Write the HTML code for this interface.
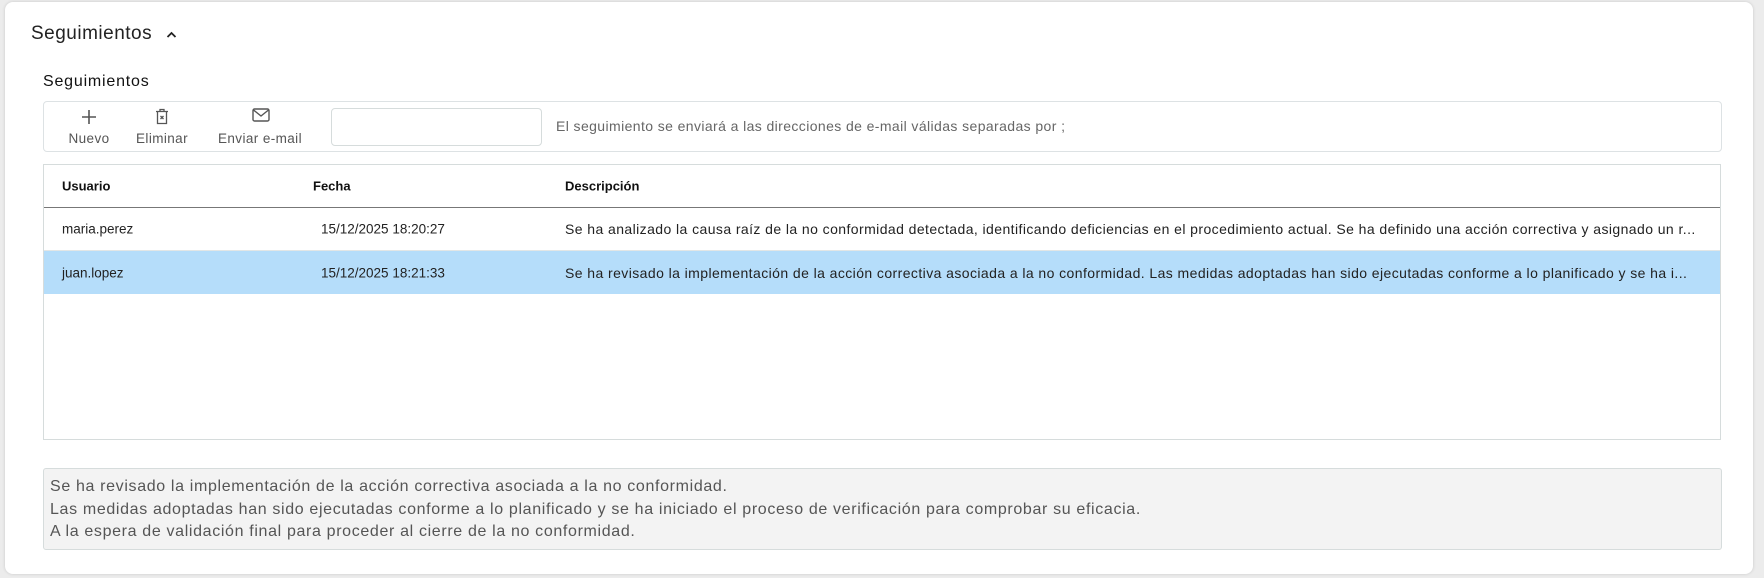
<!DOCTYPE html>
<html><head><meta charset="utf-8"><style>
*{box-sizing:border-box;margin:0;padding:0}
body{width:1764px;height:578px;background:#ececec;font-family:"Liberation Sans",sans-serif;color:#222;position:relative;overflow:hidden}
.card{position:absolute;left:5px;top:2px;width:1748px;height:572px;background:#fff;border-radius:8px;box-shadow:0 0 3px rgba(0,0,0,.15)}
.abs{position:absolute;white-space:nowrap}
.tb{position:absolute;left:43px;top:101px;width:1679px;height:51px;border:1px solid #dde2e4;border-radius:4px}
.btn{position:absolute;top:0;text-align:center;font-size:13.5px;color:#555;letter-spacing:0.4px}
.table{position:absolute;left:43px;top:164px;width:1678px;height:276px;border:1px solid #d6dcdc}
.row{position:absolute;left:0;width:100%;font-size:13.5px}
.row span{position:absolute;top:50%;transform:translateY(-50%);white-space:nowrap}
.row span.d{font-size:14px;letter-spacing:0.42px}
.desc{position:absolute;left:43px;top:468px;width:1679px;height:82px;background:#f3f3f3;border:1px solid #d6dcdc;border-radius:3px;padding:7px 6px;font-size:16px;letter-spacing:0.65px;line-height:22.5px;color:#555;white-space:nowrap}
</style></head><body>
<div class="card"></div>
<div class="abs" style="left:31px;top:23px;font-size:19px;letter-spacing:0.5px;color:#222">Seguimientos</div>
<svg class="abs" style="left:166px;top:31px" width="11" height="8" viewBox="0 0 11 8"><path d="M1.5 6 L5.5 2 L9.5 6" fill="none" stroke="#222" stroke-width="1.8"/></svg>
<div class="abs" style="left:43px;top:73px;font-size:16px;letter-spacing:0.8px;color:#111">Seguimientos</div>
<div class="tb">
 <div class="btn" style="left:20px;width:50px">
  <svg style="position:absolute;left:17px;top:7px" width="16" height="16" viewBox="0 0 16 16"><path d="M8 1V15M1 8H15" stroke="#555" stroke-width="1.6"/></svg>
  <div style="position:absolute;top:29px;left:0;width:50px">Nuevo</div></div>
 <div class="btn" style="left:86px;width:64px">
  <svg style="position:absolute;left:24px;top:6px" width="16" height="17" viewBox="0 0 16 17"><path d="M2 3.5H14M6 3.5V1.5H10V3.5M3.5 3.5V15.5H12.5V3.5M6.5 8L9.5 11M9.5 8L6.5 11" fill="none" stroke="#555" stroke-width="1.3"/></svg>
  <div style="position:absolute;top:29px;left:0;width:64px">Eliminar</div></div>
 <div class="btn" style="left:164px;width:104px">
  <svg style="position:absolute;left:44px;top:6px" width="18" height="14" viewBox="0 0 18 14"><rect x="1" y="1" width="16" height="12" rx="1.5" fill="none" stroke="#555" stroke-width="1.4"/><path d="M1.5 2L9 8L16.5 2" fill="none" stroke="#555" stroke-width="1.4"/></svg>
  <div style="position:absolute;top:29px;left:0;width:104px">Enviar e-mail</div></div>
 <div style="position:absolute;left:287px;top:6px;width:211px;height:38px;border:1px solid #d6dcdc;border-radius:4px"></div>
 <div class="abs" style="left:512px;top:16px;font-size:14px;letter-spacing:0.4px;color:#666">El seguimiento se enviará a las direcciones de e-mail válidas separadas por ;</div>
</div>
<div class="table">
 <div class="row" style="top:0;height:43px;border-bottom:1.5px solid #777;font-weight:bold;font-size:13px;color:#111"><span style="left:18px">Usuario</span><span style="left:269px">Fecha</span><span style="left:521px">Descripción</span></div>
 <div class="row" style="top:43px;height:43px;border-bottom:1px solid #e2e6e6"><span style="left:18px">maria.perez</span><span style="left:277px">15/12/2025 18:20:27</span><span class="d" style="left:521px">Se ha analizado la causa raíz de la no conformidad detectada, identificando deficiencias en el procedimiento actual. Se ha definido una acción correctiva y asignado un r...</span></div>
 <div class="row" style="top:86px;height:43px;background:#b5ddfa"><span style="left:18px">juan.lopez</span><span style="left:277px">15/12/2025 18:21:33</span><span class="d" style="left:521px">Se ha revisado la implementación de la acción correctiva asociada a la no conformidad. Las medidas adoptadas han sido ejecutadas conforme a lo planificado y se ha i...</span></div>
</div>
<div class="desc">Se ha revisado la implementación de la acción correctiva asociada a la no conformidad.<br>Las medidas adoptadas han sido ejecutadas conforme a lo planificado y se ha iniciado el proceso de verificación para comprobar su eficacia.<br>A la espera de validación final para proceder al cierre de la no conformidad.</div>
</body></html>
